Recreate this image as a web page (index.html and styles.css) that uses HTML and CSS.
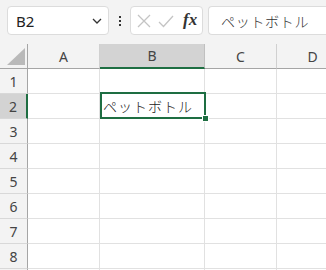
FILE: index.html
```html
<!DOCTYPE html>
<html>
<head>
<meta charset="utf-8">
<link rel="stylesheet" href="styles.css">
</head>
<body>
<div class="app">
  <div class="toolbar">
    <div class="namebox">
      <span class="ref">B2</span>
      <svg class="chev" width="10" height="6" viewBox="0 0 10 6"><path d="M1 1 L5 5 L9 1" fill="none" stroke="#333" stroke-width="1.3"/></svg>
    </div>
    <div class="dots"><span></span><span></span><span></span></div>
    <div class="fbtns">
      <svg width="14" height="14" viewBox="0 0 14 14"><path d="M1 1 L13 13 M13 1 L1 13" stroke="#c4c4c4" stroke-width="1.3" fill="none"/></svg>
      <svg width="16" height="14" viewBox="0 0 16 14"><path d="M1 8 L5.5 12.5 L15 2" stroke="#c4c4c4" stroke-width="1.3" fill="none"/></svg>
      <span class="fx">fx</span>
    </div>
    <div class="formula">ペットボトル</div>
  </div>
  <div class="grid">
    <div class="corner"><svg width="18" height="17" viewBox="0 0 18 17"><path d="M18 0 L18 17 L0 17 Z" fill="#b9b9b9"/></svg></div>
    <div class="ch">A</div><div class="ch sel">B</div><div class="ch">C</div><div class="ch">D</div>
    <div class="rh">1</div><div class="c"></div><div class="c"></div><div class="c"></div><div class="c"></div>
    <div class="rh sel">2</div><div class="c"></div><div class="c text">ペットボトル</div><div class="c"></div><div class="c"></div>
    <div class="rh">3</div><div class="c"></div><div class="c"></div><div class="c"></div><div class="c"></div>
    <div class="rh">4</div><div class="c"></div><div class="c"></div><div class="c"></div><div class="c"></div>
    <div class="rh">5</div><div class="c"></div><div class="c"></div><div class="c"></div><div class="c"></div>
    <div class="rh">6</div><div class="c"></div><div class="c"></div><div class="c"></div><div class="c"></div>
    <div class="rh">7</div><div class="c"></div><div class="c"></div><div class="c"></div><div class="c"></div>
    <div class="rh">8</div><div class="c"></div><div class="c"></div><div class="c"></div><div class="c"></div>
    <div class="rh"></div><div class="c"></div><div class="c"></div><div class="c"></div><div class="c"></div>
    <div class="selbox"></div>
    <div class="handle"></div>
  </div>
</div>
</body>
</html>
```
FILE: styles.css
```css
html, body {
  margin: 0;
  padding: 0;
}
body {
  width: 326px;
  height: 270px;
  overflow: hidden;
  background: #f3f3f3;
  font-family: "Noto Sans", "Noto Sans CJK JP", sans-serif;
}
.app {
  width: 326px;
  height: 270px;
  overflow: hidden;
}
.toolbar {
  height: 44px;
  display: flex;
  align-items: flex-start;
  padding-top: 6px;
  box-sizing: border-box;
  background: #f3f3f3;
}
.namebox {
  margin-left: 7px;
  width: 102px;
  height: 29px;
  box-sizing: border-box;
  background: #fff;
  border: 1px solid #dcdcdc;
  border-radius: 4px;
  display: flex;
  align-items: center;
  justify-content: space-between;
  padding: 0 6px 0 8px;
}
.ref {
  font-size: 15px;
  color: #222;
}
.chev {
  margin-top: 1px;
}
.dots {
  width: 21px;
  height: 29px;
  display: flex;
  flex-direction: column;
  align-items: center;
  justify-content: center;
  gap: 2px;
}
.dots span {
  width: 2px;
  height: 2px;
  background: #333;
}
.fbtns {
  width: 73px;
  height: 29px;
  box-sizing: border-box;
  background: #fff;
  border: 1px solid #dcdcdc;
  border-radius: 4px;
  display: flex;
  align-items: center;
  padding-left: 6px;
  gap: 7px;
}
.fx {
  font-family: "Liberation Serif", serif;
  font-style: italic;
  font-weight: bold;
  font-size: 17px;
  color: #333;
  margin-left: 2px;
  margin-top: -2px;
}
.formula {
  margin-left: 5px;
  flex: 1;
  height: 29px;
  box-sizing: border-box;
  background: #fff;
  border: 1px solid #dcdcdc;
  border-right: none;
  border-radius: 4px 0 0 4px;
  display: flex;
  align-items: center;
  padding-left: 12px;
  font-family: "Noto Sans CJK JP", sans-serif;
  font-weight: 300;
  font-size: 14px;
  letter-spacing: 0.7px;
  color: #333;
  white-space: nowrap;
}
.grid {
  position: relative;
  display: grid;
  grid-template-columns: 28px 72px 105px 72px 72px;
  grid-template-rows: repeat(10, 25px);
  background: #fff;
}
.corner {
  background: #f3f3f3;
  border-right: 1px solid #a5a5a5;
  border-bottom: 1px solid #a5a5a5;
  box-sizing: border-box;
  display: flex;
  align-items: flex-end;
  justify-content: flex-end;
  padding: 0 2px 3px 0;
}
.ch {
  background: #f3f3f3;
  border-right: 1px solid #d0d0d0;
  border-bottom: 1px solid #a5a5a5;
  box-sizing: border-box;
  display: flex;
  align-items: center;
  justify-content: center;
  font-size: 14px;
  color: #444;
}
.ch.sel {
  background: #d3d3d3;
  border-bottom: 2px solid #1e6e42;
  border-right-color: #c0c0c0;
}
.rh {
  background: #f3f3f3;
  border-right: 1px solid #a5a5a5;
  border-bottom: 1px solid #d8d8d8;
  box-sizing: border-box;
  display: flex;
  align-items: center;
  justify-content: center;
  font-size: 14px;
  color: #444;
}
.rh.sel {
  background: #d3d3d3;
  border-right: 2px solid #1e6e42;
}
.c {
  border-right: 1px solid #e1e1e1;
  border-bottom: 1px solid #e1e1e1;
  box-sizing: border-box;
}
.text {
  font-family: "Noto Sans CJK JP", sans-serif;
  font-weight: 300;
  font-size: 14px;
  letter-spacing: 1px;
  color: #222;
  display: flex;
  align-items: center;
  padding-left: 3px;
  white-space: nowrap;
}
.selbox {
  position: absolute;
  left: 100px;
  top: 48px;
  width: 106px;
  height: 27px;
  box-sizing: border-box;
  border: 2px solid #1e6e42;
  pointer-events: none;
}
.handle {
  position: absolute;
  left: 202px;
  top: 71px;
  width: 5px;
  height: 5px;
  background: #1e6e42;
  border: 1px solid #fff;
}
```
